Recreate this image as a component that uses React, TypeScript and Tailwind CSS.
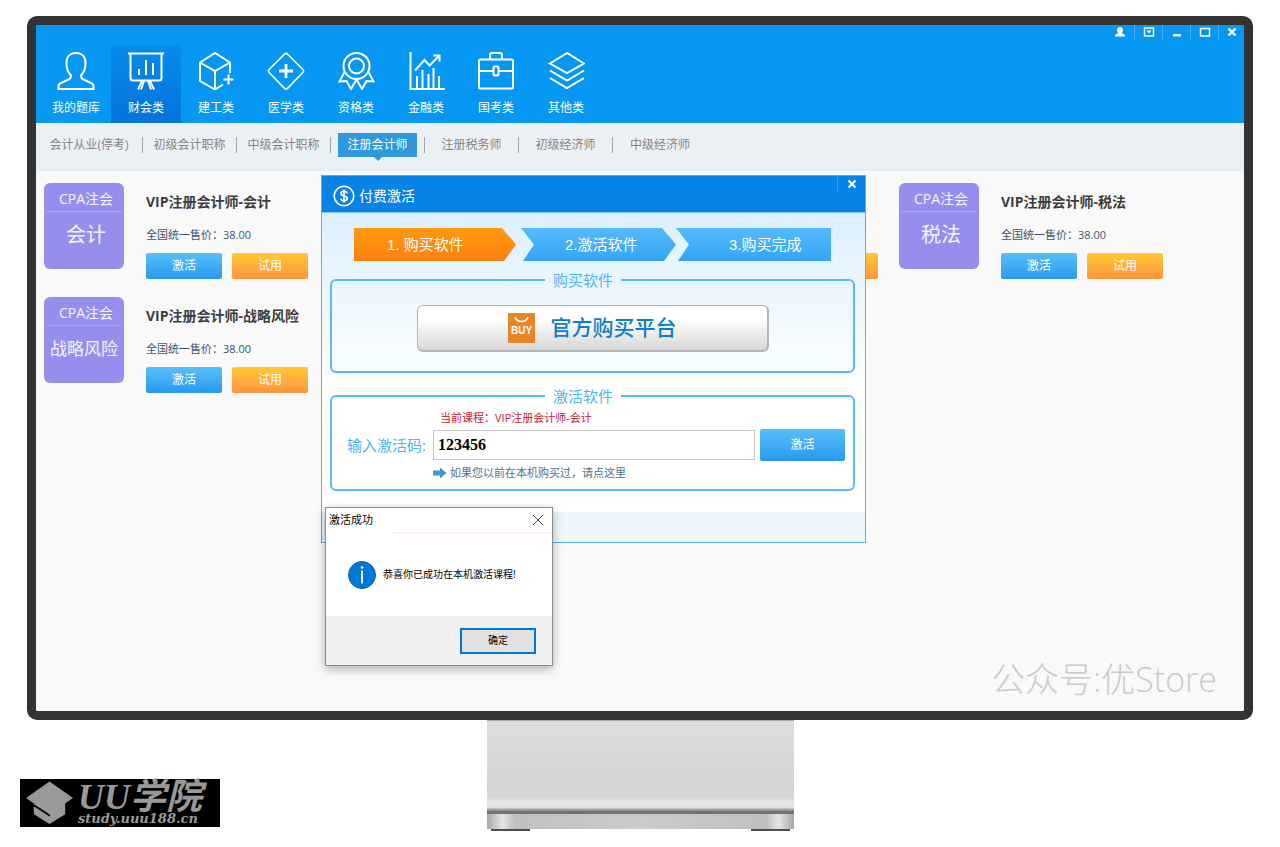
import type { ReactNode } from "react";

interface Category {
  name: string;
  icon: ReactNode;
}

interface Course {
  name: string;
  price: string;
}

const categories: Category[] = [
  {
    name: "我的题库",
    icon: <path d="M19 1c-6 0-9.500 4-9.500 10 0 6 1.500 9.500 4.500 12.500 0 2-.8 3.300-2.500 4L4 31c-1.800.8-2.500 2-2.500 3.500V37h35v-2.500c0-1.500-.7-2.700-2.500-3.500l-7.500-3.500c-1.700-.7-2.500-2-2.500-4 3-3 4.500-6.500 4.500-12.500 0-6-3.500-10-9.500-10z" />,
  },
  {
    name: "财会类",
    icon: (
      <>
        <path d="M1 1.500h36M3.500 2v24c0 1.500 1 2.500 2.500 2.500h26c1.500 0 2.500-1 2.500-2.500V2" />
        <path d="M12 17v6M19 8v15M26 11v12" />
        <path d="M15 29l-4 8.500M17 29l-3 8.500M21 29l3 8.500M23 29l4 8.500" />
      </>
    ),
  },
  {
    name: "建工类",
    icon: (
      <>
        <path d="M33 21V10.500L18 1 3 10.500V29l15 8.500 8-5" />
        <path d="M3 10.500l15 8.500 15-8.500M18 19v18" />
        <path d="M31.500 22.500v10M26.500 27.500h10" />
      </>
    ),
  },
  {
    name: "医学类",
    icon: (
      <>
        <path d="M17.500 2.100a2 2 0 0 1 3 0l15.400 15.400a2 2 0 0 1 0 3L20.500 36.400a2 2 0 0 1-3 0L2.100 20.500a2 2 0 0 1 0-3z" strokeWidth="1.600" />
        <path d="M19 12v14M12 19h14" strokeWidth="2.800" />
      </>
    ),
  },
  {
    name: "资格类",
    icon: (
      <>
        <circle cx="19.500" cy="14" r="13" />
        <circle cx="19.500" cy="14" r="7.500" />
        <path d="M7.500 20L2.500 29.500l7-.5 4.500 8 5.500-9.500M31.500 20l5 9.500-7-.5-4.500 8-5.500-9.500" />
      </>
    ),
  },
  {
    name: "金融类",
    icon: (
      <>
        <path d="M3.500 0v37H38" />
        <path d="M10 24v12M15.500 18v18M21.500 22v14M26.500 16v20M32 24v12" />
        <path d="M8 18.500L17.500 8l5 5.500L32 4M26.500 3.500h6v6" />
      </>
    ),
  },
  {
    name: "国考类",
    icon: (
      <>
        <rect x="2" y="7.500" width="34" height="29" rx="1.500" />
        <path d="M13 7V3c0-1.200.8-2 2-2h8c1.200 0 2 .8 2 2v4M2 19h14.500M21.500 19H36" />
        <rect x="16.500" y="14.500" width="5" height="9" rx="1" />
      </>
    ),
  },
  {
    name: "其他类",
    icon: <path d="M20 1L3 11.500 20 21l17-9.500zM3 18.500L20 28.500l17-10M3 26L20 36l17-10" />,
  },
];

const exams = ["会计从业(停考)", "初级会计职称", "中级会计职称", "注册会计师", "注册税务师", "初级经济师", "中级经济师"];

const courses: (Course | null)[] = [
  { name: "会计", price: "38.00" },
  null,
  null,
  { name: "税法", price: "38.00" },
  { name: "战略风险", price: "38.00" },
];

const windowButtons: Category[] = [
  {
    name: "用户",
    icon: <path d="M6 1c-2 0-3 1.500-3 3 0 1.300.5 2.200 1.300 3L1 9v1.500h10V9L7.700 7C8.500 6.200 9 5.300 9 4c0-1.500-1-3-3-3z" fill="currentColor" />,
  },
  {
    name: "菜单",
    icon: (
      <>
        <path d="M1.500 2h9v8h-9z" fill="none" stroke="currentColor" strokeWidth="1.500" />
        <path d="M3.500 4.500h5L6 7.500z" fill="currentColor" />
      </>
    ),
  },
  { name: "最小化", icon: <path d="M2 8h8v2.500H2z" fill="currentColor" /> },
  {
    name: "最大化",
    icon: <path d="M1.500 2.500h9v7.500h-9zM1 2.500h10" fill="none" stroke="currentColor" strokeWidth="1.500" />,
  },
  {
    name: "关闭",
    icon: <path d="M2.500 2.500l7 7M9.500 2.500l-7 7" fill="none" stroke="currentColor" strokeWidth="2.200" />,
  },
];

function WindowBar() {
  return (
    <div className="flex h-3.5">
      {windowButtons.map((b) => (
        <button
          key={b.name}
          aria-label={b.name}
          className="flex w-7 items-center justify-center border-l border-[#45aef5] text-white first:border-l-0 last:w-[26px]"
        >
          <svg viewBox="0 0 12 12" className="size-3">
            {b.icon}
          </svg>
        </button>
      ))}
    </div>
  );
}

function CourseCard({ course }: { course: Course }) {
  return (
    <article className="flex items-start">
      <div className="flex h-[86px] w-20 shrink-0 flex-col items-center rounded-md bg-[#968eec] px-0.5 text-white/90">
        <span className="w-full border-b border-[#aca6f3] pt-1 pl-1 text-center text-sm leading-6">CPA注会</span>
        <span className={`leading-[46px] ${course.name.length > 2 ? "text-[17px]" : "pl-1 text-xl"}`}>{course.name}</span>
      </div>
      <div className="ml-[22px] pt-[7px]">
        <h3 className="text-sm leading-6 font-bold whitespace-nowrap text-[#3c3c3c]">VIP注册会计师-{course.name}</h3>
        <p className="mt-3 text-[11px] leading-[18px] text-[#3f566e]">全国统一售价：{course.price}</p>
        <div className="mt-[9px] flex gap-2.5 text-xs text-white">
          <button className="h-[26px] w-19 rounded-xs bg-linear-to-b from-[#57bffa] to-[#2699ee]">激活</button>
          <button className="h-[26px] w-19 rounded-xs bg-linear-to-b from-[#ffca33] to-[#ff9340]">试用</button>
        </div>
      </div>
    </article>
  );
}

function CourseSlot() {
  return (
    <div className="flex items-end justify-end pr-[21px]">
      <div className="h-[26px] w-19 rounded-xs bg-linear-to-b from-[#ffca33] to-[#ff9340]" />
    </div>
  );
}

function ActivateDialog() {
  return (
    <section className="absolute top-[150px] left-[285px] w-[545px] border border-[#58aee6] bg-white">
      <header className="flex h-[37px] justify-between border-b border-[#7cc8f8] bg-[#0783e5] text-white">
        <h2 className="ml-[11px] flex items-center gap-1 pt-1 text-sm">
          <svg viewBox="0 0 22 22" className="size-[22px]" fill="none" stroke="currentColor">
            <circle cx="11" cy="11" r="9.800" strokeWidth="1.600" />
            <path d="M14 8.200C13.600 6.800 12.500 6.200 11 6.200c-1.700 0-3 .8-3 2.300 0 3.200 6.200 1.700 6.200 5 0 1.500-1.400 2.300-3.100 2.300s-3-.7-3.300-2.200M11 4.500v13" strokeWidth="1.700" />
          </svg>
          付费激活
        </h2>
        <button aria-label="关闭" className="flex h-4 w-7 items-center justify-center border-l border-[#2b9bec]">
          <svg viewBox="0 0 12 12" className="size-3" fill="none" stroke="currentColor" strokeWidth="2.200">
            <path d="M2.500 2.500l7 7M9.500 2.500l-7 7" />
          </svg>
        </button>
      </header>

      <div className="bg-linear-to-b from-[#dcf0fe] to-white to-60% pt-[15px] pr-2.5 pb-[21px] pl-2">
        <ol className="ml-6 flex h-[33px] font-['Liberation_Sans','Noto_Sans_CJK_SC',sans-serif] text-[15px] leading-[33px] text-white">
          <li className="mr-[5px] w-[162px] bg-linear-to-b from-[#ff9a0d] to-[#ff7f10] pl-[33px] [clip-path:polygon(0_0,148px_0,100%_50%,150px_100%,0_100%)]">
            1. 购买软件
          </li>
          <li className="w-[155px] bg-linear-to-b from-[#56bafc] to-[#32a5f3] pl-11 [clip-path:polygon(0_0,141px_0,100%_50%,143px_100%,2px_100%,13px_50%)]">
            2.激活软件
          </li>
          <li className="w-[155px] bg-linear-to-b from-[#56bafc] to-[#32a5f3] pl-[53px] [clip-path:polygon(0_0,100%_0,100%_100%,2px_100%,13px_50%)]">
            3.购买完成
          </li>
        </ol>

        <fieldset className="mt-2 rounded-md border-2 border-[#58baf9] pb-[19px]">
          <legend className="ml-[213px] px-2 text-[15px] leading-[22px] text-[#4db4f7]">购买软件</legend>
          <button className="mx-auto mt-[14px] flex h-[47px] w-[352px] items-center justify-center gap-4 rounded-md border border-r-2 border-b-2 border-[#b4b4b4] bg-linear-to-b from-white from-30% to-[#d6d6d6] text-[21px] font-medium text-[#0b80c3]">
            <svg viewBox="0 0 27 30" className="h-[30px] w-[27px]">
              <rect width="27" height="30" rx="1" fill="#e88625" />
              <path d="M7 4c2 6 11 6 13 0" fill="none" stroke="#fff" strokeWidth="1.500" />
              <text x="13.500" y="21" textAnchor="middle" fill="#fff" className="font-['Liberation_Sans',sans-serif] text-[10px] font-bold">
                BUY
              </text>
            </svg>
            官方购买平台
          </button>
        </fieldset>

        <fieldset className="mt-3 rounded-md border-2 border-[#58baf9] pr-2 pb-1 pl-[15px]">
          <legend className="ml-[198px] px-2 text-[15px] leading-[22px] text-[#4db4f7]">激活软件</legend>
          <p className="ml-[93px] text-[11px] leading-[22px] text-[#cc2233]">当前课程：VIP注册会计师-会计</p>
          <div className="flex items-center">
            <label htmlFor="code" className="w-[86px] shrink-0 text-[15px] leading-8 text-[#4db4f7]">
              输入激活码:
            </label>
            <input
              id="code"
              defaultValue="123456"
              className="h-[30px] min-w-0 flex-1 border border-[#c6c6c6] bg-white px-1 font-['Liberation_Serif',serif] text-base font-bold text-black"
            />
            <button className="ml-[5px] h-8 w-[85px] rounded-xs bg-linear-to-b from-[#57bffa] to-[#2699ee] text-xs text-white">
              激活
            </button>
          </div>
          <a href="#" className="ml-[86px] flex items-center gap-[3px] text-[11px] leading-6 text-[#4d7390]">
            <svg viewBox="0 0 14 12" className="h-3 w-3.5" fill="#4497cd">
              <path d="M0 3.500h7V.5L13.500 6 7 11.500v-3H0z" />
            </svg>
            如果您以前在本机购买过，请点这里
          </a>
        </fieldset>
      </div>
      <footer className="h-[30px] bg-[#ebf7fa]" />
    </section>
  );
}

function SuccessBox() {
  return (
    <section className="absolute top-[482px] left-[289px] w-[228px] border border-[#8c8c8c] bg-white text-black shadow-[0_3px_9px_rgba(0,0,0,0.3)]">
      <header className="flex h-6 items-center justify-between pr-2 pl-[3px] text-[11px]">
        激活成功
        <button aria-label="关闭">
          <svg viewBox="0 0 12 12" className="size-3" fill="none" stroke="#444">
            <path d="M1 1l10 10M11 1L1 11" />
          </svg>
        </button>
      </header>
      <div className="ml-[66px] h-px bg-[#fce9dc]" />
      <div className="flex h-[83px] items-center gap-[7px] pl-[22px] text-[10px]">
        <svg viewBox="0 0 28 28" className="size-7">
          <circle cx="14" cy="14" r="13.500" fill="#0078d7" stroke="#17609c" />
          <path d="M14 9.500v13" stroke="#fff" strokeWidth="1.800" />
          <circle cx="14" cy="6.500" r="1.300" fill="#fff" />
        </svg>
        恭喜你已成功在本机激活课程!
      </div>
      <footer className="flex h-[49px] items-center justify-end bg-[#f0f0f0] pr-4">
        <button className="h-[26px] w-[76px] border-2 border-[#0078d7] bg-[#e1e1e1] text-[10px]">确定</button>
      </footer>
    </section>
  );
}

function Stand() {
  return (
    <div>
      <div className="h-[94px] border-t border-[#a8a8a8] bg-[linear-gradient(#dcdddf,#d3d4d6_72%,#d6d7d9_82%,#e8e9eb_88%,#dcdddf_93%,#77787a_97%,#6d6e70)]" />
      <div className="h-[15px] bg-[linear-gradient(90deg,#a6a7a9,#e4e5e7_5%,#bfc0c2_9%,#cacbcd_50%,#bfc0c2_91%,#e4e5e7_95%,#a6a7a9)]" />
      <div className="flex justify-between px-1">
        <div className="h-0.5 w-[39px] bg-[#4c4d50]" />
        <div className="h-0.5 w-[39px] bg-[#4c4d50]" />
      </div>
    </div>
  );
}

function Logo() {
  return (
    <a href="#" className="mb-1 ml-5 flex h-12 w-[200px] gap-1 self-end bg-black pl-[5px] text-[#999]">
      <svg viewBox="0 0 50 48" className="h-12 w-[49px] shrink-0" fill="currentColor">
        <path d="M25 2L1 19l24 16.500L49 19z" />
        <path d="M9 24h32v11.500L25 45.500 9 35.500z" />
        <path d="M8 25.500l17.500 11.500" stroke="#000" strokeWidth="1.800" />
      </svg>
      <div className="pt-0.5 font-bold whitespace-nowrap italic">
        <div className="font-['Liberation_Serif','Noto_Sans_CJK_SC',serif] text-4xl leading-8">UU学院</div>
        <div className="font-['DejaVu_Serif',serif] text-[13px] leading-3">study.uuu188.cn</div>
      </div>
    </a>
  );
}

export default function App() {
  return (
    <div className="bg-white px-[27px] pt-4 pb-4 font-['Open_Sans','Noto_Sans_CJK_SC',sans-serif]">
      <main className="rounded-[10px] border-[9px] border-[#333] bg-[#f9f9f9]">
        <div className="relative flex min-h-[686px] flex-col">
          <header className="flex items-start justify-between bg-[#0697f2]">
            <nav className="flex pt-5 pl-[5px]">
              {categories.map((c) => (
                <a
                  key={c.name}
                  href="#"
                  className={`flex w-[70px] flex-col items-center pt-[7px] pb-1.5 text-xs leading-[18px] text-white ${
                    c.name === "财会类" ? "bg-linear-to-b from-[#068ceb] to-[#0672dc]" : ""
                  }`}
                >
                  <svg viewBox="0 0 38 38" className="mb-[9px] size-[38px]" fill="none" stroke="currentColor" strokeWidth="2">
                    {c.icon}
                  </svg>
                  {c.name}
                </a>
              ))}
            </nav>
            <WindowBar />
          </header>

          <nav className="flex h-12 border-b border-[#e1eaf5] bg-[#ebf0f4] pt-2.5 text-xs leading-6 text-[#858585]">
            {exams.map((e) => (
              <div key={e} className="flex h-6 w-[94px] items-center first:w-[107px]">
                <a
                  href="#"
                  className={`relative flex-1 text-center whitespace-nowrap ${
                    e === "注册会计师" ? "mx-[7px] bg-[#3099dc] text-white" : ""
                  }`}
                >
                  {e}
                  {e === "注册会计师" && (
                    <span className="absolute top-full left-1/2 -translate-x-1/2 border-x-4 border-t-4 border-x-transparent border-t-[#3099dc]" />
                  )}
                </a>
                {e !== "中级经济师" && <span className="h-4 w-px bg-[#a3a3a3]" />}
              </div>
            ))}
          </nav>

          <div className="grid grid-cols-[repeat(auto-fill,285px)] gap-y-[18px] px-2 pt-3">
            {courses.map((c, i) => (c ? <CourseCard key={i} course={c} /> : <CourseSlot key={i} />))}
          </div>

          <p className="mt-auto mr-[27px] mb-2 self-end text-[34px] leading-12 font-light text-[#cbcbcb]">公众号:优Store</p>

          <ActivateDialog />
          <SuccessBox />
        </div>
      </main>

      <div className="-mx-[27px] grid grid-cols-[1fr_307px_1fr]">
        <Logo />
        <Stand />
      </div>
    </div>
  );
}
